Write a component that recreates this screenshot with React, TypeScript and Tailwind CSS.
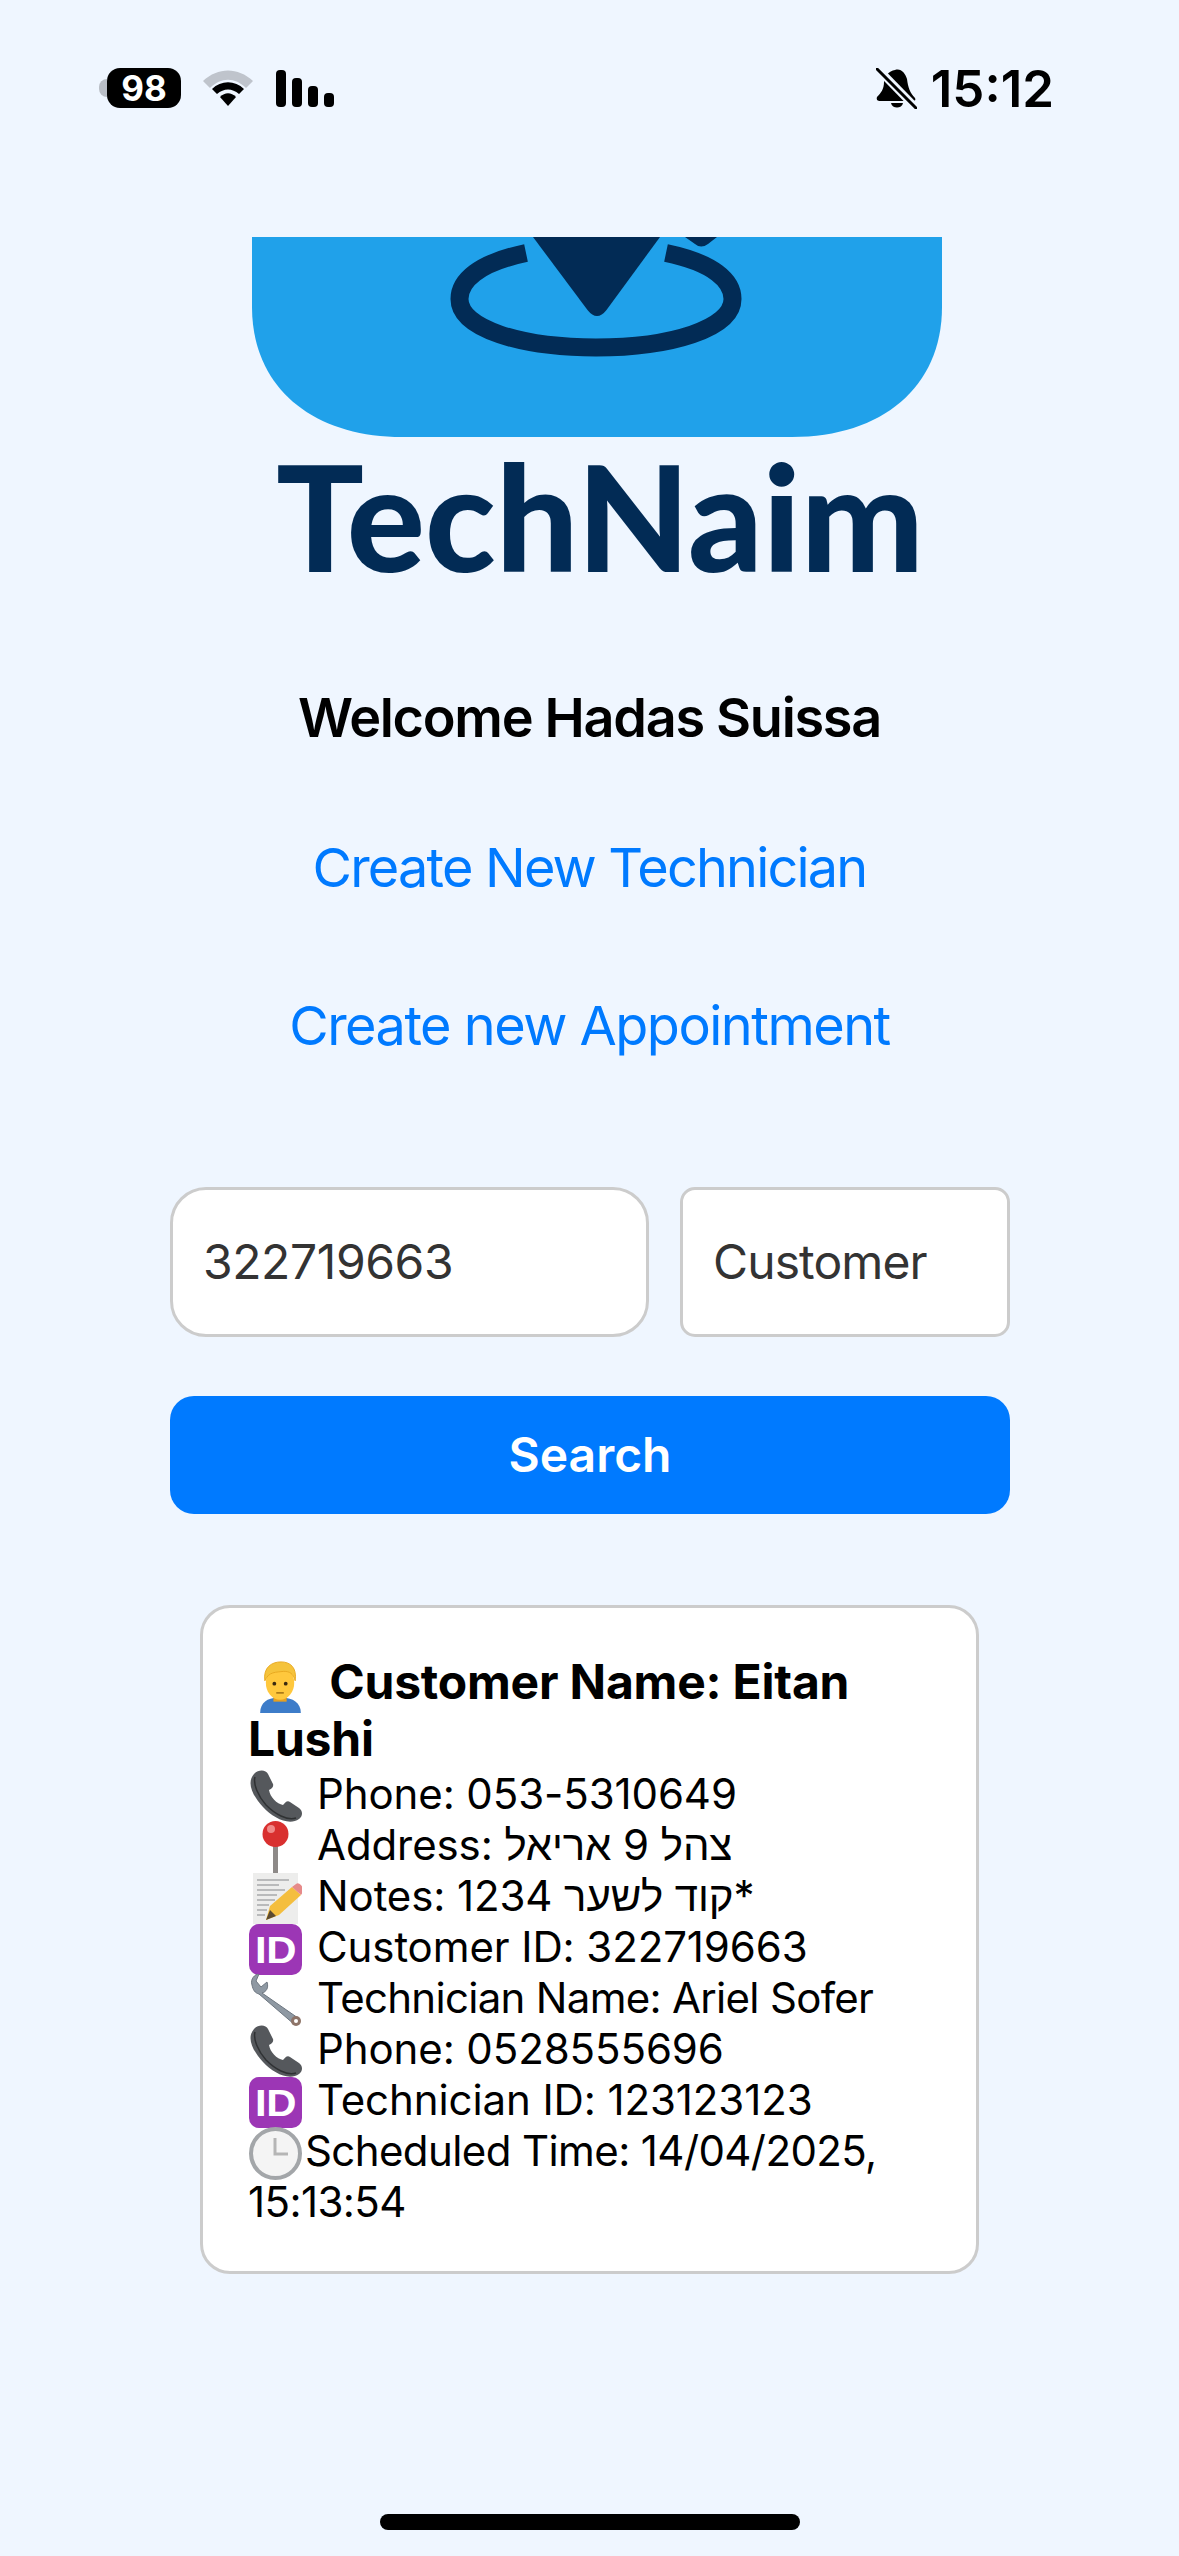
const sans = 'font-["Inter","Liberation_Sans",sans-serif]'

function Logo() {
  return (
    <svg width="690" height="200" viewBox="0 0 690 200" className="block">
      <path d="M0 0H690V70C690 150 630 200 540 200H150C60 200 0 150 0 70Z" fill="#20A1EA" />
      <path d="M281 0H408L354.500 73Q345 85 335.500 73Z" fill="#022B55" />
      <path d="M274 16C226 26 207.500 44 207.500 62C207.500 92 270 110.500 344 110.500C418 110.500 480.500 92 480.500 62C480.500 44 462 26 414 16" fill="none" stroke="#022B55" strokeWidth="18" />
      <path d="M433 0H465L456 7Q449 12 443 7Z" fill="#022B55" />
    </svg>
  )
}

const emojiClass = 'inline-block ml-[1px] w-[53px] h-[53px] -my-[12px] align-[-2px]'

function Man() {
  return (
    <svg viewBox="0 0 53 56" className={emojiClass}>
      <path d="M5 56C5 45 13 40 23 40H29C39 40 48 45 48 56Z" fill="#3D7CC9" />
      <rect x="19" y="32" width="14" height="12" fill="#E6A020" />
      <ellipse cx="26" cy="24" rx="15" ry="18" fill="#FFC83D" />
      <path d="M10 22C8 8 17 2 27 2C37 2 44 8 42 22C40 14 36 12 30 12C22 13 14 12 10 22Z" fill="#F5C33B" stroke="#E8A820" strokeWidth="1" />
      <circle cx="20" cy="25" r="2" fill="#3A2A10" />
      <circle cx="32" cy="25" r="2" fill="#3A2A10" />
      <rect x="22" y="34" width="8" height="1.500" fill="#9A6A10" />
    </svg>
  )
}

function Phone() {
  return (
    <svg viewBox="0 0 53 53" className={emojiClass}>
      <path d="M5 4C10 -1 17 0 19 4L24 14C25 17 22 19 20 20C21 27 28 34 34 35C36 33 38 30 41 32L50 38C54 41 54 46 50 49C40 56 24 48 14 37C4 26 -3 13 5 4Z" fill="#55585C" />
      <path d="M6 7C4 14 9 26 17 35C26 44 38 51 47 48" fill="none" stroke="#2F3133" strokeWidth="1.500" />
    </svg>
  )
}

function Pin() {
  return (
    <svg viewBox="0 0 53 53" className={emojiClass}>
      <rect x="24" y="22" width="5" height="31" fill="#8E8A88" />
      <circle cx="26.500" cy="13" r="13" fill="#D9302F" />
      <circle cx="22" cy="8" r="4" fill="#F08A88" />
    </svg>
  )
}

function Memo() {
  return (
    <svg viewBox="0 0 53 53" className={emojiClass}>
      <rect x="4" y="1" width="45" height="51" fill="#EDEDEC" />
      <path d="M8 8H40M8 13H30M8 18H36M8 23H28M8 28H26M8 33H20M8 38H18M8 43H16" stroke="#85878A" strokeWidth="1.200" />
      <path d="M17 48L21 34L43 15L52 23L30 43Z" fill="#F4BE3E" />
      <path d="M43 15L47 12Q49 10 52 13L54 16Q55 19 52 23Z" fill="#E68A8A" />
      <path d="M17 48L21 38L27 44Z" fill="#5C4A30" />
    </svg>
  )
}

function IdBadge() {
  return (
    <svg viewBox="0 0 53 53" className={emojiClass}>
      <rect x="0" y="1" width="53" height="51" rx="10" fill="#9C36B5" />
      <text x="6" y="40" textLength="41" lengthAdjust="spacingAndGlyphs" fill="#FFFFFF" fontSize="37" fontWeight="700" fontFamily="Liberation Sans, sans-serif">ID</text>
    </svg>
  )
}

function Wrench() {
  return (
    <svg viewBox="0 0 53 53" className={emojiClass}>
      <path d="M3 11C1 5 6 0 10 0L7 7L12 13L18 8C20 14 17 18 13 19L49 44L46 51L10 20C6 19 4 16 3 11Z" fill="#8F99A3" stroke="#6D7680" strokeWidth="1" />
      <circle cx="47" cy="47" r="5" fill="#8E7468" />
      <circle cx="47" cy="47" r="2" fill="#FFFFFF" />
    </svg>
  )
}

function Clock() {
  return (
    <svg viewBox="0 0 53 53" className={emojiClass}>
      <circle cx="26.500" cy="26.500" r="24.500" fill="#F4F4F4" stroke="#A3A6A9" strokeWidth="4" />
      <path d="M26 11V27H39" fill="none" stroke="#B5B5B5" strokeWidth="3" />
    </svg>
  )
}

function Row({ icon, children, name }: { icon: React.ReactNode; children: React.ReactNode; name?: boolean }) {
  return (
    <div>
      {icon}
      <span className={name ? 'ml-[15px] tracking-[-0.7px]' : 'ml-[15px] tracking-[-0.1px]'}>{children}</span>
    </div>
  )
}

export default function App() {
  return (
    <div className={`w-[1179px] h-[2556px] bg-[#EFF6FF] flex flex-col overflow-hidden ${sans}`}>
      {/* status bar */}
      <div className="h-[176px] pl-[99px] pr-[125px] flex items-center justify-between shrink-0">
        <div className="flex items-center">
          <div className="w-[8px] h-[18px] bg-[#B9BEC6] rounded-l-full" />
          <div className="w-[74px] h-[40px] rounded-[13px] bg-black text-white font-bold text-[35px] leading-[40px] text-center">98</div>
          <svg width="50" height="37" viewBox="0 0 50 37" className="ml-[22px]">
            <path d="M0 11C15 -3 35 -3 50 11L43 18C32 7 18 7 7 18Z" fill="#BFC4CC" />
            <path d="M9 19C18 10 32 10 41 19L36 24C29 18 21 18 14 24Z" fill="#000" />
            <path d="M17 27C22 22 28 22 33 27L25 36Z" fill="#000" />
          </svg>
          <div className="ml-[23px] flex items-end gap-[6px] h-[37px]">
            <div className="w-[10px] h-[37px] rounded-[4px] bg-black" />
            <div className="w-[10px] h-[29px] rounded-[4px] bg-black" />
            <div className="w-[10px] h-[21px] rounded-[4px] bg-black" />
            <div className="w-[10px] h-[14px] rounded-[4px] bg-black" />
          </div>
        </div>
        <div className="flex items-center gap-[14px]">
          <svg width="41" height="41" viewBox="0 0 41 41">
            <path d="M19 2C25 0 29 5 31 11C32 19 34 25 39 30C40 32 39 33 37 33H4C2 33 0 32 1 29C5 25 8 21 8 14C8 8 13 3 19 2Z" fill="#000" />
            <path d="M15 35H27C26 41 16 41 15 35Z" fill="#000" />
            <path d="M1 0L41 41" stroke="#EFF6FF" strokeWidth="8" />
            <path d="M1 1L40 40" stroke="#000" strokeWidth="3" strokeLinecap="round" />
          </svg>
          <span className="text-[51px] leading-none font-semibold text-black">15:12</span>
        </div>
      </div>

      {/* logo */}
      <div className="mt-[61px] ml-[252px] shrink-0">
        <Logo />
      </div>
      <div className="mt-[16px] h-[126px] pl-[21px] flex justify-center shrink-0 text-[#022B55] font-black text-[146px] leading-[126px] font-['Lato',sans-serif]">
        TechNaim
      </div>

      <div className="mt-[107px] text-center text-black font-semibold text-[54px] leading-[64px] tracking-[-1.3px]">Welcome Hadas Suissa</div>
      <div className="mt-[86px] text-center text-[#007AFF] text-[54px] leading-[64px] tracking-[-1.8px]">Create New Technician</div>
      <div className="mt-[94px] text-center text-[#007AFF] text-[54px] leading-[64px] tracking-[-1.5px]">Create new Appointment</div>

      {/* search */}
      <div className="mt-[129px] ml-[170px] mr-[169px] flex gap-[31px]">
        <div className="w-[479px] h-[150px] bg-white border-[3px] border-[#CCCCCC] rounded-[36px] pl-[30px] flex items-center text-[48px] text-[#333333] tracking-[-0.4px]">322719663</div>
        <div className="w-[330px] h-[150px] bg-white border-[3px] border-[#CCCCCC] rounded-[15px] pl-[30px] flex items-center text-[48px] text-[#333333] tracking-[-0.9px]">Customer</div>
      </div>
      <button className="mt-[59px] ml-[170px] mr-[169px] h-[118px] rounded-[24px] bg-[#007AFF] text-white font-semibold text-[48px]">Search</button>

      {/* result card */}
      <div className="mt-[91px] mx-[200px] bg-white border-[3px] border-[#CCCCCC] rounded-[30px] px-[45px] pt-[45px] pb-[44px] text-black text-[42px] leading-[51px] tracking-[-0.4px]">
        <div className="font-bold text-[48px] leading-[57px] mb-[1px] tracking-[-0.2px]">
          <span className="ml-[5px] mr-[11px]"><Man /></span> Customer Name: Eitan Lushi
        </div>
        <Row icon={<Phone />}>Phone: 053-5310649</Row>
        <Row icon={<Pin />}>Address: צהל 9 אריאל</Row>
        <Row icon={<Memo />}>Notes: 1234 קוד לשער*</Row>
        <Row icon={<IdBadge />}>Customer ID: 322719663</Row>
        <Row icon={<Wrench />} name>Technician Name: Ariel Sofer</Row>
        <Row icon={<Phone />}>Phone: 0528555696</Row>
        <Row icon={<IdBadge />}>Technician ID: 123123123</Row>
        <div>
          <Clock />
          <span className="ml-[3px] tracking-[-0.6px]">Scheduled Time: 14/04/2025, 15:13:54</span>
        </div>
      </div>

      {/* home indicator */}
      <div className="mt-auto mb-[26px] mx-auto w-[420px] h-[16px] rounded-full bg-black" />
    </div>
  )
}
